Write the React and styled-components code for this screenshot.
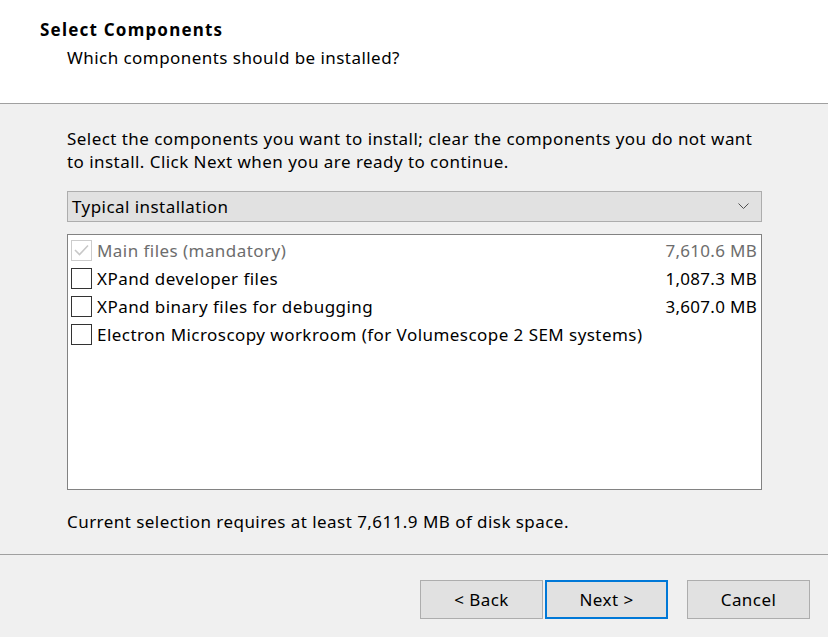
import React from "react";
import styled, { createGlobalStyle } from "styled-components";

const Global = createGlobalStyle`
  html, body { margin: 0; padding: 0; }
  body {
    width: 828px; height: 637px; overflow: hidden;
    background: #f0f0f0;
    font-family: "Noto Sans", "DejaVu Sans", sans-serif;
    font-size: 17px;
    letter-spacing: 0.45px;
    color: #000;
  }
`;

const Window = styled.div`
  width: 828px;
  height: 637px;
  display: flex;
  flex-direction: column;
  background: #f0f0f0;
`;

const Header = styled.div`
  background: #fff;
  border-bottom: 1px solid #a0a0a0;
  padding: 19px 0 0 40px;
  box-sizing: border-box;
  height: 104px;
`;

const Title = styled.div`
  font-weight: bold;
  line-height: 22px;
  letter-spacing: 1.2px;
`;

const Subtitle = styled.div`
  margin-left: 27px;
  margin-top: 6px;
  line-height: 22px;
`;

const Body = styled.div`
  padding: 23px 66px 0 67px;
  display: flex;
  flex-direction: column;
  height: 451px;
  box-sizing: border-box;
  border-bottom: 1px solid #a0a0a0;
`;

const Intro = styled.div`
  line-height: 23px;
`;

const Combo = styled.div`
  margin-top: 18px;
  height: 31px;
  box-sizing: border-box;
  background: #e1e1e1;
  border: 1px solid #adadad;
  display: flex;
  align-items: center;
  justify-content: space-between;
  padding: 0 12px 0 4px;
`;

const List = styled.div`
  margin-top: 12px;
  height: 256px;
  box-sizing: border-box;
  background: #fff;
  border: 1px solid #828282;
  padding: 1px 4px 0 3px;
`;

const Row = styled.div`
  display: flex;
  align-items: center;
  height: 28px;
  color: ${(p) => (p.$disabled ? "#6d6d6d" : "#000")};
`;

const Box = styled.div`
  width: 21px;
  height: 21px;
  box-sizing: border-box;
  border: 1px solid ${(p) => (p.$disabled ? "#cccccc" : "#333")};
  background: #fff;
  display: flex;
  align-items: center;
  justify-content: center;
  margin-right: 5px;
  flex: none;
`;

const Label = styled.span`
  flex: 1;
  white-space: nowrap;
`;

const Size = styled.span`
  white-space: nowrap;
  letter-spacing: 0.3px;
`;

const Footer = styled.div`
  margin-top: 20px;
  line-height: 23px;
`;

const Buttons = styled.div`
  display: flex;
  justify-content: flex-end;
  padding: 25px 18px 0 0;
`;

const Button = styled.div`
  width: 123px;
  height: 39px;
  box-sizing: border-box;
  background: #e1e1e1;
  border: ${(p) => (p.$default ? "2px solid #0078d7" : "1px solid #adadad")};
  display: flex;
  align-items: center;
  justify-content: center;
  margin-left: ${(p) => p.$gap}px;
`;

const items = [
  { label: "Main files (mandatory)", size: "7,610.6 MB", disabled: true, checked: true },
  { label: "XPand developer files", size: "1,087.3 MB" },
  { label: "XPand binary files for debugging", size: "3,607.0 MB" },
  { label: "Electron Microscopy workroom (for Volumescope 2 SEM systems)", size: "" },
];

export default function App() {
  return (
    <>
      <Global />
      <Window>
        <Header>
          <Title>Select Components</Title>
          <Subtitle>Which components should be installed?</Subtitle>
        </Header>
        <Body>
          <Intro>
            Select the components you want to install; clear the components you do not want
            <br />
            to install. Click Next when you are ready to continue.
          </Intro>
          <Combo>
            <span>Typical installation</span>
            <svg width="11" height="7" viewBox="0 0 11 7">
              <path d="M0.5 0.5 L5.5 5.5 L10.5 0.5" fill="none" stroke="#505050" strokeWidth="1" />
            </svg>
          </Combo>
          <List>
            {items.map((it) => (
              <Row key={it.label} $disabled={it.disabled}>
                <Box $disabled={it.disabled}>
                  {it.checked && (
                    <svg width="15" height="12" viewBox="0 0 15 12">
                      <path d="M1 6 L5.5 10.5 L14 1.5" fill="none" stroke="#c8c8c8" strokeWidth="1.6" />
                    </svg>
                  )}
                </Box>
                <Label>{it.label}</Label>
                <Size>{it.size}</Size>
              </Row>
            ))}
          </List>
          <Footer>Current selection requires at least 7,611.9 MB of disk space.</Footer>
        </Body>
        <Buttons>
          <Button $gap={0}>&lt; Back</Button>
          <Button $gap={2} $default>Next &gt;</Button>
          <Button $gap={19}>Cancel</Button>
        </Buttons>
      </Window>
    </>
  );
}
